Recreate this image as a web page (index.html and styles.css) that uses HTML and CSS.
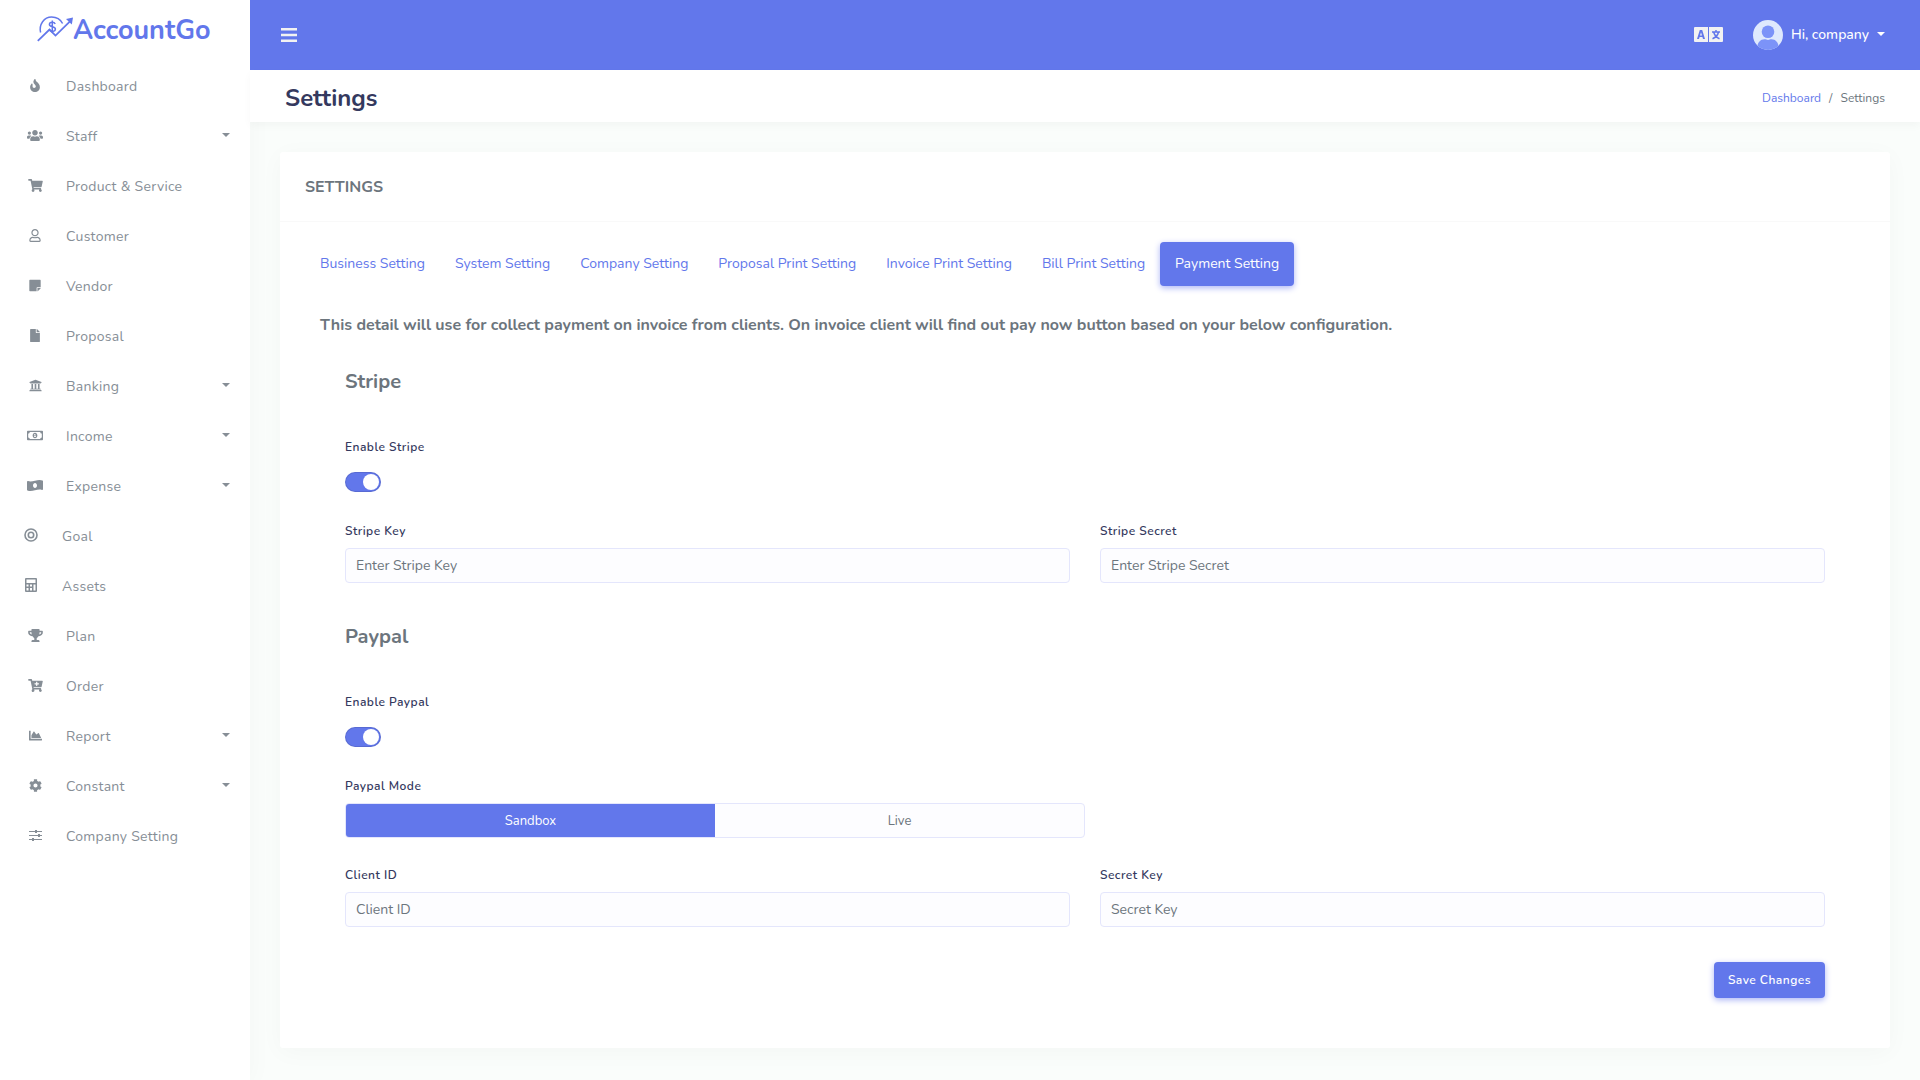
FILE: index.html
```html
<!DOCTYPE html>
<html lang="en">
<head>
    <meta charset="UTF-8">
    <meta name="viewport" content="width=device-width, initial-scale=1.0">
    <title>Settings | AccountGo</title>
    <link rel="stylesheet" href="styles.css">
</head>
<body>
    <aside class="sidebar">
        <a href="#" class="brand">
            <svg class="brand-mark line-icon" viewBox="0 0 36 26">
                <path d="M3.6 16.5C1.8 8.5 7 1 14.6 1c5 0 9 2.6 11 6.5" stroke-width="1.5"/>
                <path d="M.8 24.8L12.5 13.6l6 6L33.5 4.8" stroke-width="1.8"/>
                <path d="M29 3l7-1.5-1.2 7z" fill="currentColor" stroke="none"/>
                <path d="M18.2 8c-.5-1.2-1.7-1.7-2.9-1.7-1.7 0-2.9.8-2.9 2.2 0 3 6 1.5 6 4.6 0 1.5-1.3 2.3-3 2.3-1.5 0-2.8-.7-3.2-2M15.3 4.5v12.5" stroke-width="1.5"/>
            </svg>
            <span>AccountGo</span>
        </a>

        <nav class="menu">
            <a href="#" class="menu-item">
                <span class="menu-icon"><svg width="10" height="13" viewBox="0 0 384 512"><path d="M216 23.86c0-23.8-30.65-32.77-44.15-13.04C48 191.85 224 200 224 288c0 35.63-29.11 64.46-64.85 63.99-35.17-.45-63.15-29.77-63.15-64.94v-85.51c0-21.7-26.47-32.23-41.43-16.5C27.8 213.16 0 261.33 0 320c0 105.87 86.13 192 192 192s192-86.13 192-192c0-170.29-168-193-168-296.14z"/></svg></span>
                <span>Dashboard</span>
            </a>
            <a href="#" class="menu-item has-dropdown">
                <span class="menu-icon"><svg width="16" height="13" viewBox="0 0 640 512"><path d="M96 224c35.3 0 64-28.7 64-64s-28.7-64-64-64-64 28.7-64 64 28.7 64 64 64zm448 0c35.3 0 64-28.7 64-64s-28.7-64-64-64-64 28.7-64 64 28.7 64 64 64zm32 32h-64c-17.6 0-33.5 7.1-45.1 18.6 40.3 22.1 68.9 62 75.1 109.4h66c17.7 0 32-14.3 32-32v-32c0-35.3-28.7-64-64-64zm-256 0c61.9 0 112-50.1 112-112S381.9 32 320 32 208 82.1 208 144s50.1 112 112 112zm76.8 32h-8.3c-20.8 10-43.9 16-68.5 16s-47.6-6-68.5-16h-8.3C179.6 288 128 339.6 128 403.2V432c0 26.5 21.5 48 48 48h288c26.5 0 48-21.5 48-48v-28.8c0-63.6-51.6-115.2-115.2-115.2zm-223.7-13.4C161.5 263.1 145.6 256 128 256H64c-35.3 0-64 28.7-64 64v32c0 17.7 14.3 32 32 32h65.9c6.3-47.4 34.9-87.3 75.2-109.4z"/></svg></span>
                <span>Staff</span>
            </a>
            <a href="#" class="menu-item">
                <span class="menu-icon"><svg width="15" height="13" viewBox="0 0 576 512"><path d="M528.12 301.319l47.273-208C578.806 78.301 567.391 64 551.99 64H159.208l-9.166-44.81C147.758 8.021 137.93 0 126.529 0H24C10.745 0 0 10.745 0 24v16c0 13.255 10.745 24 24 24h69.883l70.248 343.435C147.325 417.1 136 435.222 136 456c0 30.928 25.072 56 56 56s56-25.072 56-56c0-15.674-6.447-29.835-16.824-40h209.647C430.447 426.165 424 440.326 424 456c0 30.928 25.072 56 56 56s56-25.072 56-56c0-22.172-12.888-41.332-31.579-50.405l5.517-24.276c3.413-15.018-8.002-29.319-23.403-29.319H218.117l-6.545-32h293.145c11.206 0 20.92-7.754 23.403-18.681z"/></svg></span>
                <span>Product &amp; Service</span>
            </a>
            <a href="#" class="menu-item">
                <span class="menu-icon"><svg width="12" height="13" viewBox="0 0 448 512"><path d="M313.6 304c-28.7 0-42.5 16-89.6 16-47.1 0-60.8-16-89.6-16C60.2 304 0 364.2 0 438.4V464c0 26.5 21.5 48 48 48h352c26.5 0 48-21.5 48-48v-25.6c0-74.2-60.2-134.4-134.4-134.4zM400 464H48v-25.6c0-47.6 38.8-86.4 86.4-86.4 14.6 0 38.3 16 89.6 16 51.7 0 74.9-16 89.6-16 47.6 0 86.4 38.8 86.4 86.4V464zM224 288c79.5 0 144-64.5 144-144S303.5 0 224 0 80 64.5 80 144s64.5 144 144 144zm0-240c52.9 0 96 43.1 96 96s-43.1 96-96 96-96-43.1-96-96 43.1-96 96-96z"/></svg></span>
                <span>Customer</span>
            </a>
            <a href="#" class="menu-item">
                <span class="menu-icon"><svg width="12" height="13" viewBox="0 0 448 512"><path d="M312 320h136V56c0-13.3-10.7-24-24-24H24C10.7 32 0 42.7 0 56v400c0 13.3 10.7 24 24 24h264V344c0-13.2 10.8-24 24-24zm129 55l-98 98c-4.5 4.5-10.6 7-17 7h-6V352h128v6.1c0 6.3-2.5 12.4-7 16.9z"/></svg></span>
                <span>Vendor</span>
            </a>
            <a href="#" class="menu-item">
                <span class="menu-icon"><svg width="10" height="13" viewBox="0 0 384 512"><path d="M224 136V0H24C10.7 0 0 10.7 0 24v464c0 13.3 10.7 24 24 24h336c13.3 0 24-10.7 24-24V160H248c-13.2 0-24-10.8-24-24zm160-14.1v6.1H256V0h6.1c6.4 0 12.5 2.5 17 7l97.9 98c4.5 4.5 7 10.6 7 16.9z"/></svg></span>
                <span>Proposal</span>
            </a>
            <a href="#" class="menu-item has-dropdown">
                <span class="menu-icon"><svg width="13" height="13" viewBox="0 0 512 512"><path d="M496 128v16a8 8 0 0 1-8 8h-24v12c0 6.627-5.373 12-12 12H60c-6.627 0-12-5.373-12-12v-12H24a8 8 0 0 1-8-8v-16a8 8 0 0 1 4.941-7.392l232-88a7.996 7.996 0 0 1 6.118 0l232 88A8 8 0 0 1 496 128zm-24 304H40c-13.255 0-24 10.745-24 24v16a8 8 0 0 0 8 8h464a8 8 0 0 0 8-8v-16c0-13.255-10.745-24-24-24zM96 192v192H60c-6.627 0-12 5.373-12 12v20h416v-20c0-6.627-5.373-12-12-12h-36V192h-64v192h-64V192h-64v192h-64V192H96z"/></svg></span>
                <span>Banking</span>
            </a>
            <a href="#" class="menu-item has-dropdown">
                <span class="menu-icon"><svg width="16" height="13" viewBox="0 0 640 512"><path d="M320 144c-53.02 0-96 50.14-96 112 0 61.85 42.98 112 96 112 53 0 96-50.13 96-112 0-61.86-42.98-112-96-112zm40 168c0 4.42-3.58 8-8 8h-64c-4.42 0-8-3.58-8-8v-16c0-4.42 3.58-8 8-8h16v-55.44l-.47.31a7.992 7.992 0 0 1-11.09-2.22l-8.88-13.31a7.992 7.992 0 0 1 2.22-11.09l15.33-10.22a23.99 23.99 0 0 1 13.31-4.03H328c4.42 0 8 3.58 8 8v88h16c4.42 0 8 3.58 8 8v16zM608 64H32C14.33 64 0 78.33 0 96v320c0 17.67 14.33 32 32 32h576c17.67 0 32-14.33 32-32V96c0-17.67-14.33-32-32-32zm-16 272c-35.35 0-64 28.65-64 64H112c0-35.35-28.65-64-64-64V176c35.35 0 64-28.65 64-64h416c0 35.35 28.65 64 64 64v160z"/></svg></span>
                <span>Income</span>
            </a>
            <a href="#" class="menu-item has-dropdown">
                <span class="menu-icon"><svg width="16" height="13" viewBox="0 0 640 512"><path fill-rule="evenodd" d="M621.16 54.46C582.37 38.19 543.55 32 504.75 32c-123.17-.01-246.33 62.34-369.5 62.34-30.89 0-61.76-3.92-92.65-13.72-3.47-1.1-6.95-1.62-10.35-1.62C15.04 79 0 92.32 0 110.81v317.26c0 12.63 7.23 24.6 18.84 29.46C57.63 473.81 96.45 480 135.25 480c123.17 0 246.34-62.35 369.51-62.35 30.89 0 61.76 3.92 92.65 13.72 3.47 1.1 6.95 1.62 10.35 1.62 17.21 0 32.25-13.32 32.25-31.81V83.93c-.01-12.64-7.24-24.6-18.85-29.47zM320 352c-44.19 0-80-42.99-80-96 0-53.02 35.82-96 80-96s80 42.98 80 96c0 53.03-35.83 96-80 96z"/></svg></span>
                <span>Expense</span>
            </a>
            <a href="#" class="menu-item menu-item-tight">
                <span class="menu-icon"><svg class="line-icon" width="14" height="14" viewBox="0 0 14 14" stroke-width="1.6"><circle cx="7" cy="7" r="6"/><circle cx="7" cy="7" r="2.7"/></svg></span>
                <span>Goal</span>
            </a>
            <a href="#" class="menu-item menu-item-tight">
                <span class="menu-icon"><svg width="12" height="14" viewBox="0 0 12 14"><path fill-rule="evenodd" d="M1 0h10a1 1 0 0 1 1 1v12a1 1 0 0 1-1 1H1a1 1 0 0 1-1-1V1a1 1 0 0 1 1-1zM1.5 1.5V5h9V1.5zM1.5 6.5v2h2v-2zM5 6.5v2h2v-2zM8.5 6.5v6h2v-6zM1.5 10v2.5h2V10zM5 10v2.5h2V10z"/></svg></span>
                <span>Assets</span>
            </a>
            <a href="#" class="menu-item">
                <span class="menu-icon"><svg width="15" height="13" viewBox="0 0 576 512"><path fill-rule="evenodd" d="M552 64H448V24c0-13.3-10.7-24-24-24H152c-13.3 0-24 10.7-24 24v40H24C10.7 64 0 74.7 0 88v56c0 35.7 22.5 72.4 61.9 100.7 31.5 22.7 69.8 37.1 110 41.7C203.3 338.5 240 360 240 360v72h-48c-35.3 0-64 20.7-64 56v12c0 6.6 5.4 12 12 12h296c6.6 0 12-5.4 12-12v-12c0-35.3-28.7-56-64-56h-48v-72s36.7-21.5 68.1-73.6c40.3-4.6 78.6-19 110-41.7 39.3-28.3 61.9-65 61.9-100.7V88c0-13.3-10.7-24-24-24zM99.3 192.8C74.9 175.2 64 155.6 64 144v-16h64.2c1 32.6 5.8 61.2 12.8 86.2-15.1-5.2-29.2-12.4-41.7-21.4zM512 144c0 16.1-17.7 36.1-35.3 48.8-12.5 9-26.7 16.2-41.8 21.4 7-25 11.8-53.6 12.8-86.2H512v16z"/></svg></span>
                <span>Plan</span>
            </a>
            <a href="#" class="menu-item">
                <span class="menu-icon"><svg width="15" height="13" viewBox="0 0 576 512"><path fill-rule="evenodd" d="M504.717 320H211.572l6.545 32h268.418c15.401 0 26.816 14.301 23.403 29.319l-5.517 24.276C523.112 414.668 536 433.828 536 456c0 31.202-25.519 56.444-56.824 55.994-29.823-.429-54.35-24.631-55.155-54.447-.44-16.287 6.085-31.049 16.803-41.548H231.176C241.553 426.165 248 440.326 248 456c0 31.813-26.528 57.431-58.67 55.938-28.54-1.325-51.751-24.385-53.251-52.917-1.158-22.034 10.436-41.455 28.051-51.586L93.883 64H24C10.745 64 0 53.255 0 40V24C0 10.745 10.745 0 24 0h102.529c11.401 0 21.228 8.021 23.513 19.19L159.208 64H551.99c15.401 0 26.816 14.301 23.403 29.319l-47.273 208C525.637 312.246 515.923 320 504.717 320zM408 168h-48v-40c0-8.837-7.163-16-16-16h-16c-8.837 0-16 7.163-16 16v40h-48c-8.837 0-16 7.163-16 16v16c0 8.837 7.163 16 16 16h48v40c0 8.837 7.163 16 16 16h16c8.837 0 16-7.163 16-16v-40h48c8.837 0 16-7.163 16-16v-16c0-8.837-7.163-16-16-16z"/></svg></span>
                <span>Order</span>
            </a>
            <a href="#" class="menu-item has-dropdown">
                <span class="menu-icon"><svg width="13" height="13" viewBox="0 0 512 512"><path d="M500 384c6.6 0 12 5.4 12 12v40c0 6.6-5.4 12-12 12H12c-6.6 0-12-5.4-12-12V76c0-6.6 5.4-12 12-12h40c6.6 0 12 5.4 12 12v308h436zM372.7 159.5L288 216l-85.3-113.7c-5.1-6.8-15.5-6.3-19.9 1L96 248v104h384l-89.9-187.8c-3.2-6.5-11.4-8.7-17.4-4.7z"/></svg></span>
                <span>Report</span>
            </a>
            <a href="#" class="menu-item has-dropdown">
                <span class="menu-icon"><svg width="13" height="13" viewBox="0 0 512 512"><path d="M487.4 315.7l-42.6-24.6c4.3-23.2 4.3-47 0-70.2l42.6-24.6c4.9-2.8 7.1-8.6 5.5-14-11.1-35.6-30-67.8-54.7-94.6-3.8-4.1-10-5.1-14.8-2.3L380.8 110c-17.9-15.4-38.5-27.3-60.8-35.1V25.8c0-5.6-3.9-10.5-9.4-11.7-36.7-8.2-74.3-7.8-109.2 0-5.5 1.2-9.4 6.1-9.4 11.7V75c-22.2 7.9-42.8 19.8-60.8 35.1L88.7 85.5c-4.9-2.8-11-1.9-14.8 2.3-24.7 26.7-43.6 58.9-54.7 94.6-1.7 5.4.6 11.2 5.5 14L67.3 221c-4.3 23.2-4.3 47 0 70.2l-42.6 24.6c-4.9 2.8-7.1 8.6-5.5 14 11.1 35.6 30 67.8 54.7 94.6 3.8 4.1 10 5.1 14.8 2.3l42.6-24.6c17.9 15.4 38.5 27.3 60.8 35.1v49.2c0 5.6 3.9 10.5 9.4 11.7 36.7 8.2 74.3 7.8 109.2 0 5.5-1.2 9.4-6.1 9.4-11.7v-49.2c22.2-7.9 42.8-19.8 60.8-35.1l42.6 24.6c4.9 2.8 11 1.9 14.8-2.3 24.7-26.7 43.6-58.9 54.7-94.6 1.5-5.5-.7-11.3-5.6-14.1zM256 336c-44.1 0-80-35.9-80-80s35.9-80 80-80 80 35.9 80 80-35.9 80-80 80z"/></svg></span>
                <span>Constant</span>
            </a>
            <a href="#" class="menu-item">
                <span class="menu-icon"><svg width="13" height="13" viewBox="0 0 13 13"><path d="M0 2h13v1H0zM0 6h13v1H0zM0 10h13v1H0zM6 1h2v3H6zM9 5h2v3H9zM3 9h2v3H3z"/></svg></span>
                <span>Company Setting</span>
            </a>
        </nav>
    </aside>

    <div class="page">
        <header class="navbar">
            <button type="button" class="icon-button" aria-label="Toggle menu">
                <svg width="16" height="14" viewBox="0 0 16 14"><path d="M0 0h16v2.5H0zM0 5.8h16v2.5H0zM0 11.5h16V14H0z"/></svg>
            </button>
            <div class="navbar-right">
                <button type="button" class="icon-button" aria-label="Language">
                    <svg width="29" height="15" viewBox="0 0 29 15">
                        <path fill-rule="evenodd" d="M1 0h13v15H1a1 1 0 0 1-1-1V1a1 1 0 0 1 1-1zM5.8 3L3 12h2l.6-2h2.8l.6 2h2L8.2 3zM7 5.2L8 8.5H6z"/>
                        <path d="M15 0h13a1 1 0 0 1 1 1v13a1 1 0 0 1-1 1H15z"/>
                        <path d="M18 5h8M22 3v2M24.5 5c-.6 3-3 5.5-6 6.7M19.8 5.5c.8 2.8 3 5 5.7 6.2" fill="none" stroke="#6277eb" stroke-width="1.5"/>
                    </svg>
                </button>
                <button type="button" class="user-menu">
                    <svg width="30" height="30" viewBox="0 0 30 30">
                        <defs><clipPath id="avatarClip"><circle cx="15" cy="15" r="15"/></clipPath></defs>
                        <g clip-path="url(#avatarClip)">
                            <path d="M0 0h30v30H0z" fill="#dfe9fd"/>
                            <circle cx="15" cy="11.8" r="6.3" fill="#7c93f8"/>
                            <path d="M4.5 30v-3.5c0-4 3-7.3 7-7.3 1.5 0 2 .7 3.5.7s2-.7 3.5-.7c4 0 7 3.3 7 7.3V30z" fill="#7c93f8"/>
                        </g>
                    </svg>
                    <span>Hi, company</span>
                    <span class="caret"></span>
                </button>
            </div>
        </header>

        <div class="page-header">
            <h1>Settings</h1>
            <nav class="breadcrumb">
                <a href="#">Dashboard</a>
                <span>/</span>
                <span>Settings</span>
            </nav>
        </div>

        <main class="content">
            <section class="card">
                <div class="card-header">
                    <h2>SETTINGS</h2>
                </div>
                <div class="card-body">
                    <nav class="tabs">
                        <a href="#" class="tab">Business Setting</a>
                        <a href="#" class="tab">System Setting</a>
                        <a href="#" class="tab">Company Setting</a>
                        <a href="#" class="tab">Proposal Print Setting</a>
                        <a href="#" class="tab">Invoice Print Setting</a>
                        <a href="#" class="tab">Bill Print Setting</a>
                        <a href="#" class="tab active">Payment Setting</a>
                    </nav>

                    <p class="intro">This detail will use for collect payment on invoice from clients. On invoice client will find out pay now button based on your below configuration.</p>

                    <form class="payment-form">
                        <section class="gateway">
                            <h3>Stripe</h3>
                            <div class="switch-field">
                                <label for="enableStripe">Enable Stripe</label>
                                <input type="checkbox" id="enableStripe" class="switch" checked>
                            </div>
                            <div class="row">
                                <div class="field">
                                    <label for="stripeKey">Stripe Key</label>
                                    <input type="text" id="stripeKey" class="text-input" placeholder="Enter Stripe Key">
                                </div>
                                <div class="field">
                                    <label for="stripeSecret">Stripe Secret</label>
                                    <input type="text" id="stripeSecret" class="text-input" placeholder="Enter Stripe Secret">
                                </div>
                            </div>
                        </section>

                        <section class="gateway">
                            <h3>Paypal</h3>
                            <div class="switch-field">
                                <label for="enablePaypal">Enable Paypal</label>
                                <input type="checkbox" id="enablePaypal" class="switch" checked>
                            </div>
                            <fieldset class="mode-field">
                                <legend>Paypal Mode</legend>
                                <div class="mode-group">
                                    <label class="mode"><input type="radio" name="mode" value="sandbox" checked><span>Sandbox</span></label>
                                    <label class="mode"><input type="radio" name="mode" value="live"><span>Live</span></label>
                                </div>
                            </fieldset>
                            <div class="row">
                                <div class="field">
                                    <label for="clientId">Client ID</label>
                                    <input type="text" id="clientId" class="text-input" placeholder="Client ID">
                                </div>
                                <div class="field">
                                    <label for="secretKey">Secret Key</label>
                                    <input type="text" id="secretKey" class="text-input" placeholder="Secret Key">
                                </div>
                            </div>
                        </section>

                        <div class="form-actions">
                            <button type="submit" class="button">Save Changes</button>
                        </div>
                    </form>
                </div>
            </section>
        </main>
    </div>
</body>
</html>
```
FILE: styles.css
```css
:root {
    --primary: #6277eb;
    --heading: #34395e;
    --text: #6c757d;
    --muted: #868e96;
    --border: #e4e6fc;
    --input-bg: #fdfdff;
    --page-bg: #fafdfb;
}

* {
    box-sizing: border-box;
}

body {
    margin: 0;
    display: flex;
    min-height: 100vh;
    background-color: var(--page-bg);
    color: var(--text);
    font-family: Nunito, "Open Sans", sans-serif;
    font-size: 14px;
    line-height: 24px;
}

a {
    color: var(--primary);
    text-decoration: none;
}

h1, h2, h3, p {
    margin: 0;
}

button, input {
    font-family: inherit;
}

svg {
    display: block;
    fill: currentColor;
}

.line-icon {
    fill: none;
    stroke: currentColor;
}

.caret {
    border: 4px solid transparent;
    border-top-color: currentColor;
    border-bottom: 0;
}

/* Sidebar */
.sidebar {
    flex: 0 0 250px;
    background: white;
    box-shadow: 0 4px 25px rgba(0, 0, 0, 0.03);
}

.brand {
    display: flex;
    align-items: center;
    height: 62px;
    padding-left: 37px;
    font-size: 27px;
    font-weight: 700;
}

.brand-mark {
    width: 36px;
    height: 26px;
    margin-bottom: 4px;
}

.menu-item {
    display: flex;
    align-items: center;
    gap: 16px;
    height: 50px;
    padding: 0 20px;
    color: var(--muted);
    letter-spacing: 0.02em;
}

.menu-item-tight {
    padding-left: 16px;
}

.menu-icon {
    display: flex;
    justify-content: center;
    width: 30px;
    padding-bottom: 4px;
}

.has-dropdown::after {
    content: "";
    margin: 0 0 4px auto;
    border: 4px solid transparent;
    border-top-color: currentColor;
    border-bottom: 0;
}

.menu-item:hover {
    color: var(--primary);
}

/* Top bar */
.page {
    flex: 1;
    min-width: 0;
}

.navbar {
    display: flex;
    justify-content: space-between;
    align-items: center;
    height: 70px;
    padding: 0 35px 0 31px;
    background-color: var(--primary);
    color: white;
}

.navbar-right {
    display: flex;
    align-items: center;
    gap: 30px;
}

.icon-button, .user-menu {
    padding: 0;
    border: 0;
    background: none;
    color: #f2f2f2;
    cursor: pointer;
}

.navbar-right .icon-button {
    padding-bottom: 2px;
}

.user-menu {
    display: flex;
    align-items: center;
    gap: 8px;
    color: white;
    font-size: 14px;
    font-weight: 500;
}

.user-menu span {
    margin-bottom: 2px;
}

.page-header {
    display: flex;
    justify-content: space-between;
    align-items: center;
    height: 52px;
    padding: 3px 35px 0;
    background: white;
    box-shadow: 0 4px 8px rgba(0, 0, 0, 0.03);
}

h1 {
    color: var(--heading);
    font-size: 24px;
    font-weight: 700;
}

.breadcrumb {
    display: flex;
    gap: 8px;
    font-size: 12px;
}

/* Settings card */
.content {
    padding: 30px;
}

.card {
    background: white;
    border-radius: 3px;
    box-shadow: 0 4px 25px rgba(0, 0, 0, 0.03);
}

.card-header {
    display: flex;
    align-items: center;
    height: 70px;
    padding: 0 25px;
    border-bottom: 1px solid #f9f9f9;
}

h2 {
    font-size: 16px;
    font-weight: 700;
}

.card-body {
    padding: 20px 40px 50px;
}

.tabs {
    display: flex;
    flex-wrap: wrap;
    margin: 0 -15px 27px;
}

.tab {
    padding: 10px 15px;
    border-radius: 4px;
}

.tab.active {
    background-color: var(--primary);
    color: white;
    box-shadow: 0 2px 6px #acb5f6;
}

.intro {
    margin-bottom: 33px;
    font-size: 16px;
    font-weight: 700;
}

/* Payment form */
.payment-form {
    padding: 0 25px;
}

.gateway {
    margin-bottom: 42px;
}

h3 {
    margin-bottom: 44px;
    font-size: 20px;
    font-weight: 700;
}

.gateway + .gateway {
    margin-bottom: 35px;
}

.switch-field {
    margin-bottom: 30px;
}

.switch-field label, .field label, legend {
    display: block;
    padding: 0;
    margin-bottom: 8px;
    color: var(--heading);
    font-size: 12px;
    font-weight: 600;
    line-height: 18px;
    letter-spacing: 0.04em;
}

.switch {
    appearance: none;
    display: block;
    width: 36px;
    height: 20px;
    margin: 16px 0 0;
    padding: 1px;
    border: 1px solid rgba(0, 0, 0, 0.1);
    border-radius: 10px;
    background-color: #f3f3f3;
    cursor: pointer;
}

.switch::before {
    content: "";
    display: block;
    width: 16px;
    height: 16px;
    border-radius: 50%;
    background: white;
}

.switch:checked {
    background-color: var(--primary);
}

.switch:checked::before {
    margin-left: auto;
}

.row {
    display: flex;
    gap: 30px;
}

.field {
    flex: 1;
}

.text-input {
    display: block;
    width: 100%;
    height: 35px;
    padding: 0 10px;
    border: 1px solid var(--border);
    border-radius: 4px;
    background-color: var(--input-bg);
    color: #495057;
    font-size: 14px;
}

.text-input::placeholder {
    color: var(--text);
}

.mode-field {
    margin: 0 0 28px;
    padding: 0;
    border: 0;
}

.mode-group {
    display: flex;
    width: 50%;
    height: 35px;
    border: 1px solid var(--border);
    border-radius: 4px;
    background-color: var(--input-bg);
}

.mode {
    position: relative;
    flex: 1;
    display: flex;
    cursor: pointer;
}

.mode input {
    position: absolute;
    opacity: 0;
}

.mode span {
    flex: 1;
    padding-top: 5px;
    font-size: 13px;
    text-align: center;
}

.mode input:checked + span {
    border-radius: 3px 0 0 3px;
    background-color: var(--primary);
    color: white;
}

.form-actions {
    display: flex;
    justify-content: flex-end;
}

.button {
    height: 36px;
    padding: 0 14px;
    border: 0;
    border-radius: 4px;
    background-color: var(--primary);
    color: white;
    font-size: 12px;
    font-weight: 600;
    letter-spacing: 0.04em;
    box-shadow: 0 2px 6px #acb5f6;
    cursor: pointer;
}
```
